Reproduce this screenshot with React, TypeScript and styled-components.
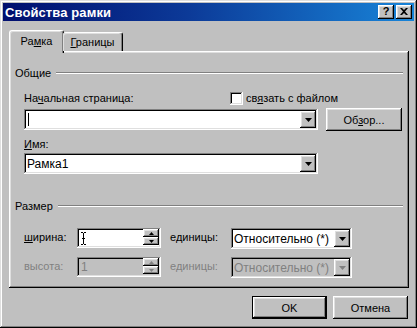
import React from "react";
import styled, { createGlobalStyle, css } from "styled-components";

const Global = createGlobalStyle`
  html, body { margin: 0; padding: 0; background: #c0c0c0; }
  body { font-family: "Liberation Sans", Arial, sans-serif; font-size: 11px; color: #000; }
  * { box-sizing: border-box; }
`;

const raised = css`
  box-shadow: inset -1px -1px #000, inset 1px 1px #fff, inset -2px -2px #808080, inset 2px 2px #dfdfdf;
`;
const sunken = css`
  box-shadow: inset -1px -1px #fff, inset 1px 1px #808080, inset -2px -2px #dfdfdf, inset 2px 2px #000;
`;

const Window = styled.div`
  width: 417px;
  height: 328px;
  background: #c0c0c0;
  padding: 3px;
  display: flex;
  flex-direction: column;
  box-shadow: inset -1px -1px #000, inset 1px 1px #dfdfdf, inset -2px -2px #808080, inset 2px 2px #fff;
`;

const TitleBar = styled.div`
  height: 18px;
  background: linear-gradient(90deg, #000e6e 0%, #0c3a98 45%, #1884d8 100%);
  display: flex;
  align-items: center;
  justify-content: space-between;
  padding: 0 2px 0 2px;
`;

const Title = styled.span`
  color: #fff;
  font-weight: bold;
  font-size: 13px;
  letter-spacing: 0.1px;
`;

const TitleButtons = styled.div`
  display: flex;
  gap: 2px;
`;

const TitleButton = styled.div`
  width: 16px;
  height: 14px;
  background: #c0c0c0;
  ${raised};
  display: flex;
  align-items: center;
  justify-content: center;
  font-weight: bold;
  font-size: 11px;
  line-height: 1;
  padding-bottom: 1px;
`;

const TabRow = styled.div`
  display: flex;
  align-items: flex-end;
  height: 21px;
  margin: 9px 0 0 6px;
  position: relative;
  z-index: 1;
`;

const Tab = styled.div<{ $active?: boolean }>`
  background: #c0c0c0;
  border-top: 1px solid #fff;
  border-left: 1px solid #fff;
  border-right: 1px solid #000;
  border-radius: 3px 3px 0 0;
  box-shadow: inset -1px 0 #808080, inset 1px 1px #dfdfdf;
  display: flex;
  align-items: center;
  justify-content: center;
  ${(p) =>
    p.$active
      ? css`
          width: 55px;
          height: 23px;
          margin-bottom: -2px;
          padding-bottom: 2px;
        `
      : css`
          width: 60px;
          height: 19px;
          margin-left: -1px;
          border-left: none;
        `}
`;

const Panel = styled.div`
  margin: 0 5px 0 6px;
  height: 237px;
  background: #c0c0c0;
  ${raised};
  padding: 15px 6px 0 6px;
  display: flex;
  flex-direction: column;
`;

const GroupHeader = styled.div<{ $mt?: number }>`
  display: flex;
  align-items: center;
  height: 13px;
  gap: 5px;
  margin-top: ${(p) => p.$mt ?? 0}px;
`;

const Etched = styled.div`
  flex: 1;
  height: 2px;
  border-top: 1px solid #808080;
  border-bottom: 1px solid #fff;
`;

const Row = styled.div<{ $mt?: number; $h?: number }>`
  display: flex;
  align-items: flex-start;
  margin-left: 9px;
  margin-top: ${(p) => p.$mt ?? 0}px;
  height: ${(p) => p.$h ?? 13}px;
`;

const RowLabel = styled.span<{ $w?: number; $disabled?: boolean; $mt?: number }>`
  width: ${(p) => (p.$w ? `${p.$w}px` : "auto")};
  flex: none;
  line-height: 13px;
  margin-top: ${(p) => p.$mt ?? 0}px;
  color: ${(p) => (p.$disabled ? "#808080" : "#000")};
  white-space: nowrap;
`;

const U = styled.span`
  text-decoration: underline;
  text-underline-offset: 1px;
`;

const CheckBox = styled.div`
  width: 13px;
  height: 13px;
  background: #fff;
  ${sunken};
  margin-right: 3px;
`;

const Combo = styled.div<{ $w: number; $disabled?: boolean }>`
  width: ${(p) => p.$w}px;
  height: 21px;
  background: ${(p) => (p.$disabled ? "#c0c0c0" : "#fff")};
  color: ${(p) => (p.$disabled ? "#808080" : "#000")};
  ${sunken};
  padding: 2px 2px 2px 3px;
  display: flex;
  align-items: center;
  font-size: 12px;
`;

const ComboText = styled.span`
  flex: 1;
  display: flex;
  align-items: center;
  line-height: 14px;
  white-space: nowrap;
  overflow: hidden;
`;

const Caret = styled.span`
  display: inline-block;
  width: 1px;
  height: 13px;
  background: #000;
  margin-left: 1px;
`;

const DropButton = styled.div`
  width: 16px;
  height: 17px;
  background: #c0c0c0;
  ${raised};
  display: flex;
  align-items: center;
  justify-content: center;
`;

const Button = styled.div<{ $w?: number; $default?: boolean }>`
  width: ${(p) => p.$w ?? 75}px;
  height: 23px;
  background: #c0c0c0;
  display: flex;
  align-items: center;
  justify-content: center;
  ${(p) =>
    p.$default
      ? css`
          box-shadow: inset 0 0 0 1px #000, inset -2px -2px #000, inset 2px 2px #fff,
            inset -3px -3px #808080, inset 3px 3px #dfdfdf;
        `
      : raised};
`;

const Spin = styled.div<{ $disabled?: boolean }>`
  width: 84px;
  height: 20px;
  background: ${(p) => (p.$disabled ? "#c0c0c0" : "#fff")};
  color: ${(p) => (p.$disabled ? "#808080" : "#000")};
  ${sunken};
  padding: 2px 2px 2px 4px;
  display: flex;
  align-items: stretch;
  font-size: 12px;
  margin-right: 9px;
`;

const SpinText = styled.span`
  flex: 1;
  display: flex;
  align-items: center;
`;

const SpinButtons = styled.div`
  display: flex;
  flex-direction: column;
  width: 16px;
  margin-top: -1px;
`;

const SpinBtn = styled.div`
  height: 8px;
  background: #c0c0c0;
  ${raised};
  display: flex;
  align-items: center;
  justify-content: center;
`;

const Footer = styled.div`
  display: flex;
  justify-content: flex-end;
  gap: 6px;
  margin-top: 8px;
  padding-right: 6px;
`;

const DownArrow = ({ color = "#000" }: { color?: string }) => (
  <svg width="7" height="4" viewBox="0 0 7 4">
    <path d="M0 0h7L3.5 4z" fill={color} />
  </svg>
);

const SmallArrow = ({ up, color = "#000" }: { up?: boolean; color?: string }) => (
  <svg width="5" height="3" viewBox="0 0 5 3">
    <path d={up ? "M2.5 0L5 3H0z" : "M0 0h5L2.5 3z"} fill={color} />
  </svg>
);

const IBeam = () => (
  <svg width="5" height="13" viewBox="0 0 5 13">
    <path d="M0 0.5h2M3 0.5h2M2.5 1v11M0 12.5h2M3 12.5h2M1 6.5h3" stroke="#000" strokeWidth="1" fill="none" />
  </svg>
);

const CloseGlyph = () => (
  <svg width="8" height="7" viewBox="0 0 8 7">
    <path d="M0 0h2l2 2 2-2h2L5 3.5 8 7H6L4 5 2 7H0l3-3.5z" fill="#000" />
  </svg>
);

export default function App() {
  return (
    <>
      <Global />
      <Window>
        <TitleBar>
          <Title>Свойства рамки</Title>
          <TitleButtons>
            <TitleButton>?</TitleButton>
            <TitleButton>
              <CloseGlyph />
            </TitleButton>
          </TitleButtons>
        </TitleBar>

        <TabRow>
          <Tab $active>
            <span>
              Ра<U>м</U>ка
            </span>
          </Tab>
          <Tab>
            <span>
              <U>Г</U>раницы
            </span>
          </Tab>
        </TabRow>

        <Panel>
          <GroupHeader>
            <span>Общие</span>
            <Etched />
          </GroupHeader>

          <Row $mt={13}>
            <RowLabel $w={206}>
              На<U>ч</U>альная страница:
            </RowLabel>
            <CheckBox />
            <RowLabel>
              св<U>я</U>зать с файлом
            </RowLabel>
          </Row>

          <Row $mt={3} $h={23}>
            <Combo $w={294} style={{ marginTop: 1 }}>
              <ComboText>
                <Caret />
              </ComboText>
              <DropButton>
                <DownArrow />
              </DropButton>
            </Combo>
            <Button $w={76} style={{ marginLeft: 8 }}>
              <span>
                Об<U>з</U>ор...
              </span>
            </Button>
          </Row>

          <Row $mt={7}>
            <RowLabel>
              <U>И</U>мя:
            </RowLabel>
          </Row>

          <Row $mt={2} $h={21}>
            <Combo $w={294}>
              <ComboText>Рамка1</ComboText>
              <DropButton>
                <DownArrow />
              </DropButton>
            </Combo>
          </Row>

          <GroupHeader $mt={25}>
            <span>Размер</span>
            <Etched />
          </GroupHeader>

          <Row $mt={16} $h={21}>
            <RowLabel $w={53} $mt={3}>
              <U>ш</U>ирина:
            </RowLabel>
            <Spin>
              <SpinText>
                <IBeam />
              </SpinText>
              <SpinButtons>
                <SpinBtn>
                  <SmallArrow up />
                </SpinBtn>
                <SpinBtn>
                  <SmallArrow />
                </SpinBtn>
              </SpinButtons>
            </Spin>
            <RowLabel $w={61} $mt={3}>
              е<U>д</U>иницы:
            </RowLabel>
            <Combo $w={121}>
              <ComboText>Относительно (*)</ComboText>
              <DropButton>
                <DownArrow />
              </DropButton>
            </Combo>
          </Row>

          <Row $mt={8} $h={21}>
            <RowLabel $w={53} $mt={3} $disabled>
              высота:
            </RowLabel>
            <Spin $disabled>
              <SpinText>1</SpinText>
              <SpinButtons>
                <SpinBtn>
                  <SmallArrow up color="#808080" />
                </SpinBtn>
                <SpinBtn>
                  <SmallArrow color="#808080" />
                </SpinBtn>
              </SpinButtons>
            </Spin>
            <RowLabel $w={61} $mt={3} $disabled>
              единицы:
            </RowLabel>
            <Combo $w={121} $disabled>
              <ComboText>Относительно (*)</ComboText>
              <DropButton>
                <DownArrow color="#808080" />
              </DropButton>
            </Combo>
          </Row>
        </Panel>

        <Footer>
          <Button $default>OK</Button>
          <Button>Отмена</Button>
        </Footer>
      </Window>
    </>
  );
}
